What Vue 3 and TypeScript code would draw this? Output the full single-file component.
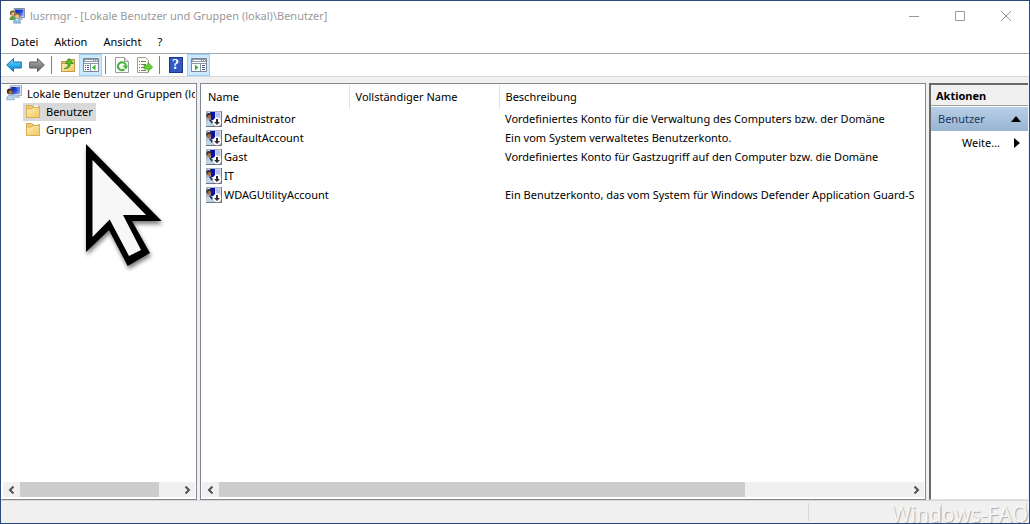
<script setup lang="ts">
interface Account {
  name: string
  fullName: string
  description: string
}

const menus: string[] = ['Datei', 'Aktion', 'Ansicht', '?']

const groups: { label: string; selected: boolean }[] = [
  { label: 'Benutzer', selected: true },
  { label: 'Gruppen', selected: false },
]

const accounts: Account[] = [
  { name: 'Administrator', fullName: '', description: 'Vordefiniertes Konto für die Verwaltung des Computers bzw. der Domäne' },
  { name: 'DefaultAccount', fullName: '', description: 'Ein vom System verwaltetes Benutzerkonto.' },
  { name: 'Gast', fullName: '', description: 'Vordefiniertes Konto für Gastzugriff auf den Computer bzw. die Domäne' },
  { name: 'IT', fullName: '', description: '' },
  { name: 'WDAGUtilityAccount', fullName: '', description: 'Ein Benutzerkonto, das vom System für Windows Defender Application Guard-S' },
]
</script>

<template>
  <div class="window">
    <svg class="defs" width="0" height="0" aria-hidden="true">
      <defs>
        <linearGradient id="blueArrow" x1="0" y1="0" x2="0" y2="1">
          <stop offset="0" stop-color="#8fdcff" /><stop offset=".5" stop-color="#2fb1ee" /><stop offset="1" stop-color="#1580c8" />
        </linearGradient>
        <linearGradient id="greyArrow" x1="0" y1="0" x2="0" y2="1">
          <stop offset="0" stop-color="#b4b4b4" /><stop offset=".5" stop-color="#8a8a8a" /><stop offset="1" stop-color="#666" />
        </linearGradient>
        <linearGradient id="folderFill" x1="0" y1="0" x2="1" y2="1">
          <stop offset="0" stop-color="#fff0b4" /><stop offset="1" stop-color="#efc763" />
        </linearGradient>
        <linearGradient id="screenFill" x1="0" y1="0" x2="1" y2="1">
          <stop offset="0" stop-color="#0a1fa8" /><stop offset=".5" stop-color="#2348d6" /><stop offset="1" stop-color="#a9c4fa" />
        </linearGradient>
        <symbol id="users" viewBox="0 0 16 16">
          <path d="M5 .5h10.5v9L6 10z" fill="#d3dbe6" stroke="#8291a8" />
          <path d="M6 1.5h8.5v7L7 9z" fill="url(#screenFill)" />
          <path d="M10 10h3l1 2h-5z" fill="#aeb8c4" />
          <circle cx="3.5" cy="5" r="2.6" fill="#6b5a30" />
          <circle cx="4" cy="5.8" r="1.8" fill="#e3b176" />
          <path d="M.5 12c0-3 1-4 3-4s3 1 3 4z" fill="#5c9f45" />
          <circle cx="8" cy="7.6" r="2.7" fill="#8c6a24" />
          <circle cx="8" cy="8.3" r="1.9" fill="#f0ca8c" />
          <path d="M4.5 15.2c0-3 1.3-4.5 3.5-4.5s3.7 1.5 3.7 4.5z" fill="#8fc0dd" stroke="#5f91b0" stroke-width=".5" />
          <path d="m7 11 1 2 1-2z" fill="#fff" />
        </symbol>
        <symbol id="computerUser" viewBox="0 0 16 16">
          <path d="M4 .8 15.5.5v10L5 11z" fill="#dbe2ec" stroke="#92a0b5" stroke-width=".8" />
          <path d="M5 2h9v7L6 9.500z" fill="url(#screenFill)" />
          <path d="m9.500 2 4.500 6V2z" fill="#6f92f0" opacity=".6" />
          <path d="M9 11h4l1.500 2h-6z" fill="#b9c3d0" />
          <circle cx="3.800" cy="6.400" r="2.900" fill="#362720" />
          <circle cx="4.500" cy="7.300" r="2" fill="#a9703c" />
          <path d="M.5 14.800c0-3.200 1.500-4.700 3.800-4.700s4.200 1.500 4.200 4.700z" fill="#b9d7ec" stroke="#739bb8" stroke-width=".6" />
        </symbol>
        <symbol id="account" viewBox="0 0 16 16">
          <path d="M0 0h16v16H0z" fill="#aab2c0" />
          <path d="M2 1h13v12H4z" fill="#dfe3f0" />
          <path d="M4 1h5v8H5z" fill="#0713a6" />
          <path d="M9 1h5v6l-4-1z" fill="#c9d0f4" />
          <path d="M10 3h4M10 5h4" stroke="#a4afe8" />
          <circle cx="2.800" cy="4.500" r="2.600" fill="#3a3034" />
          <circle cx="3.200" cy="5.900" r="2" fill="#a66d48" />
          <path d="M0 14c0-3 1-5 3-5s4 2 4 5v1H0z" fill="#bdd6e8" />
          <path d="m4 8 3 3-1 2-3-4z" fill="#292e48" />
          <path d="M0 15.500h15.500V0" fill="none" stroke="#6c7482" />
          <circle cx="11" cy="11" r="4.300" fill="#fff" />
          <path d="M10 8h2v3h2l-3 3-3-3h2z" fill="#303030" />
        </symbol>
        <symbol id="folder" viewBox="0 0 16 16">
          <path d="M1.500 14.500v-12h5l1.500 1h6.500v11z" fill="#edcb75" stroke="#d4aa4c" />
          <path d="M9 2.500h4v2H9z" fill="#fff" />
          <path d="M1.500 6h5L8 4.500h6.500v10h-13z" fill="url(#folderFill)" stroke="#d9b153" />
        </symbol>
      </defs>
    </svg>

    <header class="titlebar">
      <svg class="icon"><use href="#users" /></svg>
      <span class="title">lusrmgr - [Lokale Benutzer und Gruppen (lokal)\Benutzer]</span>
      <div class="controls">
        <button type="button" aria-label="Minimieren"><svg viewBox="0 0 10 10"><path d="M0 5.500h10" /></svg></button>
        <button type="button" aria-label="Maximieren"><svg viewBox="0 0 10 10"><path d="M.5.5h9v9h-9z" /></svg></button>
        <button type="button" aria-label="Schließen"><svg viewBox="0 0 10 10"><path d="m0 0 10 10M10 0 0 10" /></svg></button>
      </div>
    </header>

    <nav class="menubar">
      <button v-for="menu in menus" :key="menu" type="button">{{ menu }}</button>
    </nav>

    <div class="toolbar">
      <button type="button" aria-label="Zurück">
        <svg class="icon" viewBox="0 0 16 16"><path d="m.7 8 6.800-6.500v3.500h7.800v6H7.500v3.500z" fill="url(#blueArrow)" stroke="#1b6fae" /></svg>
      </button>
      <button type="button" aria-label="Vorwärts">
        <svg class="icon" viewBox="0 0 16 16"><path d="M15.300 8 8.500 1.500V5H.7v6h7.800v3.500z" fill="url(#greyArrow)" stroke="#5b5b5b" /></svg>
      </button>
      <span class="separator"></span>
      <button type="button" aria-label="Eine Ebene nach oben">
        <svg class="icon" viewBox="0 0 16 16">
          <path d="M1.500 14.500v-10h5l1-2h7v12z" fill="#e5c56b" stroke="#b8943c" />
          <path d="M1.500 6.500h13v8h-13z" fill="url(#folderFill)" stroke="#c49d43" />
          <path d="M4 11.500c3 0 4-2 4-5H5.500L9.300 1.300 13 6.500h-2.500C10.500 10 8 12 4 11.500z" fill="#51bd2b" stroke="#31891b" stroke-width=".7" />
        </svg>
      </button>
      <button type="button" class="pressed" aria-label="Konsolenstruktur einblenden">
        <svg class="icon" viewBox="0 0 16 16">
          <path d="M.5 1.500h15v13H.5z" fill="#fff" stroke="#7d8793" />
          <path d="M1 2h14v3H1z" fill="#8f9aa8" /><path d="M2 3.500h8M11 3.500h1m1 0h1" stroke="#fff" />
          <path d="M.5 6.500h15M7.500 7v7" stroke="#8b97a5" />
          <path d="M2 8.500h1m1 0h2m-4 2h1m1 0h2m-4 2h1m1 0h2" stroke="#3c5b86" />
          <path d="M12.500 7.500v6l-3.500-3z" fill="#3bb52c" />
        </svg>
      </button>
      <span class="separator"></span>
      <button type="button" aria-label="Aktualisieren">
        <svg class="icon" viewBox="0 0 16 16">
          <path d="M1.500.5h9l4 4v11h-13z" fill="#fbfbf7" stroke="#9a9f9c" /><path d="M10.500.5v4h4" fill="#ddd" stroke="#9a9f9c" />
          <path d="M10.500 12.300a4 4 0 1 1 1.400-3.800" fill="none" stroke="#3bb133" stroke-width="2" />
          <path d="M8.500 8.500h5.500l-2 4z" fill="#3bb133" />
        </svg>
      </button>
      <button type="button" aria-label="Liste exportieren">
        <svg class="icon" viewBox="0 0 16 16">
          <path d="M.5.5h8l3 3v12H.5z" fill="#fffdf1" stroke="#a49e8d" />
          <path d="M2 4.500h1m1 0h5m-7 3h1m1 0h5m-7 3h1m1 0h5m-7 3h1m1 0h5" stroke="#777" />
          <path d="M7 8h4V5.500l4.700 4.700L11 14.500V12H7z" fill="#69cf38" stroke="#3c9f26" stroke-width=".7" />
        </svg>
      </button>
      <span class="separator"></span>
      <button type="button" class="help" aria-label="Hilfe"><span>?</span></button>
      <button type="button" class="pressed" aria-label="Aktionsbereich einblenden">
        <svg class="icon" viewBox="0 0 16 16">
          <path d="M.5 1.500h15v13H.5z" fill="#fff" stroke="#7d8793" />
          <path d="M1 2h14v3H1z" fill="#8f9aa8" /><path d="M2 3.500h8M11 3.500h1m1 0h1" stroke="#fff" />
          <path d="M.5 6.500h15M9.500 7v7" stroke="#8b97a5" />
          <path d="M11 8.500h3m-3 2h3m-3 2h3" stroke="#3c5b86" />
          <path d="M4 7.500v6l3.500-3z" fill="#3bb52c" />
        </svg>
      </button>
    </div>

    <main class="workspace">
      <aside class="panel tree">
        <div class="panel-body">
          <div class="node root"><svg class="icon"><use href="#computerUser" /></svg><span>Lokale Benutzer und Gruppen (lokal)</span></div>
          <div v-for="group in groups" :key="group.label" class="node child" :class="{ selected: group.selected }">
            <svg class="icon"><use href="#folder" /></svg><span>{{ group.label }}</span>
          </div>
        </div>
        <div class="scrollbar">
          <button type="button" aria-label="Nach links"><svg viewBox="0 0 8 8"><path d="M5.500.5 2 4l3.500 3.500" /></svg></button>
          <div class="track"><div class="thumb tree-thumb"></div></div>
          <button type="button" aria-label="Nach rechts"><svg viewBox="0 0 8 8"><path d="M2.500.5 6 4 2.500 7.500" /></svg></button>
        </div>
      </aside>

      <section class="panel list">
        <div class="panel-body">
          <table>
            <colgroup><col class="col-name" /><col class="col-full" /><col /></colgroup>
            <thead>
              <tr><th scope="col">Name</th><th scope="col">Vollständiger Name</th><th scope="col">Beschreibung</th></tr>
            </thead>
            <tbody>
              <tr v-for="account in accounts" :key="account.name">
                <td><div class="account"><svg class="icon"><use href="#account" /></svg>{{ account.name }}</div></td>
                <td>{{ account.fullName }}</td>
                <td>{{ account.description }}</td>
              </tr>
            </tbody>
          </table>
        </div>
        <div class="scrollbar">
          <button type="button" aria-label="Nach links"><svg viewBox="0 0 8 8"><path d="M5.500.5 2 4l3.500 3.500" /></svg></button>
          <div class="track"><div class="thumb list-thumb"></div></div>
          <button type="button" aria-label="Nach rechts"><svg viewBox="0 0 8 8"><path d="M2.500.5 6 4 2.500 7.500" /></svg></button>
        </div>
      </section>

      <aside class="actions">
        <h2>Aktionen</h2>
        <button type="button" class="action-group">Benutzer<svg width="10" height="6" viewBox="0 0 10 6"><path d="m0 6 5-6 5 6z" /></svg></button>
        <button type="button" class="action-more">Weite...<svg width="6" height="10" viewBox="0 0 6 10"><path d="m0 0 6 5-6 5z" /></svg></button>
      </aside>
    </main>

    <footer class="statusbar"><span></span><span></span><span></span></footer>

    <svg class="pointer" width="92" height="140" viewBox="0 0 92 140" aria-hidden="true">
      <path class="pointer-edge" d="M6 8v108l23-22 18.700 36L70 117 52 85h29.700z" />
      <path class="pointer-face" d="M12.500 24v77l17.200-17.500L49 120l12-6-18-35h23z" />
    </svg>
    <div class="watermark">Windows-FAQ</div>
  </div>
</template>

<style>
body {
  margin: 0;
}
</style>

<style scoped>
* {
  box-sizing: border-box;
}

.window {
  position: relative;
  display: flex;
  flex-direction: column;
  height: 100vh;
  overflow: hidden;
  border: 1px solid #2d4878;
  background: #f0f0f0;
  color: #000;
  font: 11px/18px "Noto Sans", "Open Sans", sans-serif;
}

.defs {
  position: absolute;
}

button {
  margin: 0;
  padding: 0;
  border: 0;
  background: none;
  color: inherit;
  font: inherit;
}

.icon {
  flex: none;
  display: block;
  width: 16px;
  height: 16px;
}

.titlebar {
  display: flex;
  align-items: center;
  height: 29px;
  padding-left: 8px;
  background: #fff;
}

.title {
  flex: 1;
  padding-left: 5px;
  color: #999;
}

.controls {
  display: flex;
}

.controls button {
  display: grid;
  place-items: center;
  width: 46px;
  height: 29px;
}

.controls svg {
  width: 10px;
  height: 10px;
  fill: none;
  stroke: #999;
}

.menubar {
  display: flex;
  gap: 16px;
  height: 24px;
  padding: 0 10px;
  border-bottom: 1px solid #9fa9ae;
  background: #fff;
}

.toolbar {
  display: flex;
  align-items: center;
  height: 23px;
  padding-left: 1px;
  border-bottom: 1px solid #d8d8d8;
  background: #fff;
}

.toolbar button {
  display: grid;
  place-items: center;
  width: 23px;
  height: 22px;
}

.toolbar .pressed {
  border: 1px solid #99d1ff;
  background: #cce8ff;
}

.separator {
  width: 1px;
  height: 18px;
  margin: 0 4px 0 3px;
  background: #808080;
}

.help span {
  width: 14px;
  height: 16px;
  border: 1px solid #1b348d;
  background: #3358c0;
  color: #fff;
  font: bold 14px/14px "Liberation Serif", serif;
}

.workspace {
  flex: 1;
  display: flex;
  gap: 3px;
  min-height: 0;
  padding: 6px 1px 0 0;
}

.panel {
  display: flex;
  flex-direction: column;
  min-width: 0;
  padding: 1px 1px 2px;
  border: 1px solid #828790;
  background: #fff;
}

.tree {
  flex: none;
  width: 196px;
  border-left-color: #fff;
}

.list {
  flex: 1;
}

.panel-body {
  flex: 1;
  min-height: 0;
  overflow: hidden;
}

.node {
  display: flex;
  width: max-content;
  height: 18px;
}

.root {
  gap: 5px;
  width: 100%;
  padding-left: 3px;
}

.root span {
  overflow: hidden;
  white-space: nowrap;
}

.child {
  gap: 5px;
  margin-left: 20px;
  padding: 0 3px 0 2px;
}

.selected {
  background: #d9d9d9;
}

.scrollbar {
  display: flex;
  height: 15px;
  background: #f0f0f0;
}

.scrollbar button {
  display: grid;
  place-items: center;
  width: 17px;
}

.scrollbar svg {
  width: 8px;
  height: 8px;
  fill: none;
  stroke: #505050;
  stroke-width: 2;
}

.track {
  flex: 1;
}

.thumb {
  height: 100%;
  background: #cdcdcd;
}

.tree-thumb {
  width: 88%;
}

.list-thumb {
  width: 76.5%;
}

table {
  width: 100%;
  border-collapse: collapse;
  table-layout: fixed;
}

.col-name {
  width: 147px;
}

.col-full {
  width: 150px;
}

th,
td {
  overflow: hidden;
  padding: 0 0 0 6px;
  text-align: left;
  white-space: nowrap;
  font-weight: normal;
}

th {
  height: 24px;
  border-right: 1px solid #e2e2e2;
}

th:last-child {
  border-right: 0;
}

td {
  height: 19px;
}

td:first-child {
  padding-left: 4px;
}

.account {
  display: flex;
  align-items: center;
  gap: 2px;
}

.actions {
  flex: none;
  width: 99px;
  border: solid #696969;
  border-width: 2px 0 0 2px;
  border-bottom: 1px solid #e3e3e3;
  background: #fff;
}

h2 {
  height: 21px;
  margin: 0 0 1px;
  padding-left: 5px;
  border-bottom: 1px solid #a0a0a0;
  background: #f0f0f0;
  font-size: 11px;
  line-height: 22px;
}

.actions button {
  display: flex;
  align-items: center;
  justify-content: space-between;
  width: 100%;
  height: 24px;
}

.action-group {
  padding: 0 7px;
  background: linear-gradient(#b9cfe7, #98b4d2);
  color: #1e395b;
}

.actions .action-group svg {
  fill: #000;
}

.actions .action-more {
  padding: 0 8px 0 31px;
}

.statusbar {
  display: grid;
  grid-template-columns: 1fr 133px 85px;
  height: 23px;
  padding: 2px 2px 2px 0;
  border-top: 1px solid #d7d7d7;
}

.statusbar span {
  border-right: 1px solid #d7d7d7;
}

.pointer {
  position: absolute;
  left: 79px;
  top: 135px;
  filter: drop-shadow(1px 3px 2px #0008);
}

.pointer-face {
  fill: #f7f7f7;
}

.watermark {
  position: absolute;
  right: 1px;
  bottom: -4px;
  color: #f7f7f7;
  font: 21px/26px "Open Sans", sans-serif;
  text-shadow: 1px 1px 1px #aaa;
}
</style>
